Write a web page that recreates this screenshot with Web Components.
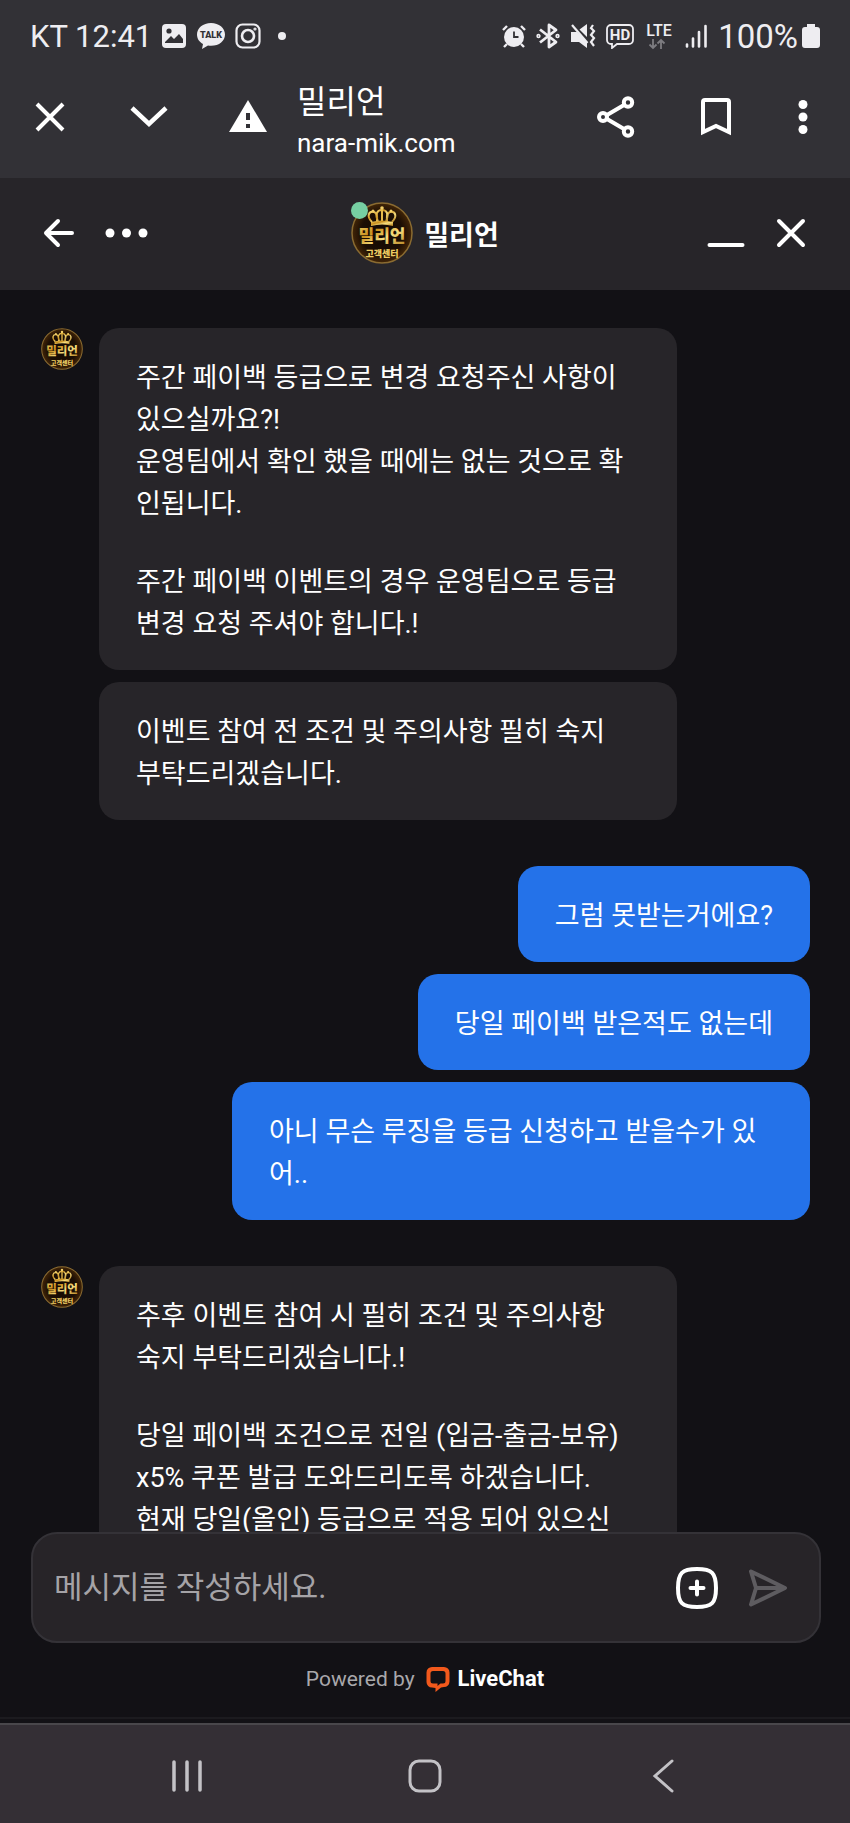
<!DOCTYPE html>
<html lang="ko">
<head>
<meta charset="utf-8">
<meta name="viewport" content="width=device-width, initial-scale=1">
<title>밀리언</title>
<style>
    body {
        margin: 0;
        background: #121115;
        color: #fff;
        font-family: Roboto, "Noto Sans CJK KR", sans-serif;
    }
</style>
</head>
<body>

<phone-screen>
    <status-bar slot="top" carrier="KT" time="12:41" battery="100%"></status-bar>
    <browser-bar slot="top">
        <span slot="title">밀리언</span>
        <span slot="url">nara-mik.com</span>
    </browser-bar>
    <chat-header slot="top">밀리언</chat-header>

    <message-group from="agent">
        <chat-bubble>
            <p>주간 페이백 등급으로 변경 요청주신 사항이<br>있으실까요?!<br>운영팀에서 확인 했을 때에는 없는 것으로 확<br>인됩니다.</p>
            <p>주간 페이백 이벤트의 경우 운영팀으로 등급<br>변경 요청 주셔야 합니다.!</p>
        </chat-bubble>
        <chat-bubble>
            <p>이벤트 참여 전 조건 및 주의사항 필히 숙지<br>부탁드리겠습니다.</p>
        </chat-bubble>
    </message-group>

    <message-group from="me">
        <chat-bubble><p>그럼 못받는거에요?</p></chat-bubble>
        <chat-bubble><p>당일 페이백 받은적도 없는데</p></chat-bubble>
        <chat-bubble><p>아니 무슨 루징을 등급 신청하고 받을수가 있어..</p></chat-bubble>
    </message-group>

    <message-group from="agent">
        <chat-bubble>
            <p>추후 이벤트 참여 시 필히 조건 및 주의사항<br>숙지 부탁드리겠습니다.!</p>
            <p>당일 페이백 조건으로 전일 (입금-출금-보유)<br>x5% 쿠폰 발급 도와드리도록 하겠습니다.<br>현재 당일(올인) 등급으로 적용 되어 있으신</p>
        </chat-bubble>
    </message-group>

    <chat-composer slot="bottom" placeholder="메시지를 작성하세요."></chat-composer>
    <powered-by slot="bottom"></powered-by>
    <nav-bar slot="bottom"></nav-bar>
</phone-screen>

<script>
// makes a template and hands it back
function tpl(html) {
    const t = document.createElement("template");
    t.innerHTML = html;
    return t;
}

// every component clones its template into an open shadow root
class BaseElement extends HTMLElement {
    constructor() {
        super();
        this.attachShadow({mode: "open"});
        this.shadowRoot.appendChild(this.constructor.template.content.cloneNode(true));
    }
}

const buttonCss = `
    button {
        display: flex;
        align-items: center;
        justify-content: center;
        margin: 0;
        padding: 0;
        border: 0;
        background: none;
        color: inherit;
        cursor: pointer;
    }
    svg { display: block; flex: none; }
`;

//PHONE SCREEN - fixed bars at both ends, messages in between
class PhoneScreen extends BaseElement {
    static template = tpl(`
        <style>
            :host { display: flex; flex-direction: column; height: 100vh; }
            main {
                flex: 1;
                min-height: 0;
                overflow: hidden;
                display: flex;
                flex-direction: column;
                gap: 46px;
                box-sizing: border-box;
                padding: 38px 40px 0 41px;
            }
        </style>
        <slot name="top"></slot>
        <main><slot></slot></main>
        <slot name="bottom"></slot>
    `);
}
customElements.define("phone-screen", PhoneScreen);

//STATUS BAR
class StatusBar extends BaseElement {
    static template = tpl(`
        <style>
            :host {
                display: flex;
                justify-content: space-between;
                align-items: center;
                height: 72px;
                flex: none;
                padding: 0 30px;
                background: #323136;
                color: #eeedf1;
            }
            div { display: flex; align-items: center; }
            .left { gap: 9px; font-size: 31px; }
            .right { gap: 10px; font-size: 33px; }
            .power { gap: 4px; }
            svg { display: block; flex: none; }
            .more { padding-left: 8px; }
        </style>
        <div class="left">
            <span class="clock"></span>
            <svg width="26" height="26" viewBox="0 0 26 26"><rect x="1" y="1" width="24" height="24" rx="4" fill="currentColor"/><circle cx="8" cy="8" r="2.6" fill="#323136"/><path d="M4 19l6-6 3 3 5-5 4 5v4H4z" fill="#323136"/></svg>
            <svg width="30" height="28" viewBox="0 0 30 28"><path d="M15 1C7 1 1 6 1 12.500C1 17 3.500 20 7 22l-1 5 6-3.400C22 25 29 19.500 29 12.500 29 6 23 1 15 1z" fill="currentColor"/><text x="15" y="16" text-anchor="middle" font-size="9" font-weight="900" fill="#323136">TALK</text></svg>
            <svg width="26" height="26" viewBox="0 0 26 26" fill="none" stroke="currentColor"><rect x="1.500" y="1.500" width="23" height="23" rx="6" stroke-width="2.200"/><circle cx="13" cy="13" r="6" stroke-width="2.600"/><circle cx="20" cy="6" r="1" stroke-width="1.200"/></svg>
            <svg class="more" width="8" height="8" viewBox="0 0 8 8"><circle cx="4" cy="4" r="4" fill="currentColor"/></svg>
        </div>
        <div class="right">
            <svg width="24" height="24" viewBox="0 0 24 24" fill="none" stroke="currentColor" stroke-width="2.400"><circle cx="12" cy="13" r="10" fill="currentColor" stroke="none"/><path d="M1 6l4-4M23 6l-4-4M5 20l-3 3M19 20l3 3"/><path d="M12 7.500V13h4.500" stroke="#323136" stroke-width="1.800"/></svg>
            <svg width="24" height="26" viewBox="0 0 24 26" fill="none" stroke="currentColor" stroke-width="2.800" stroke-linejoin="round"><path d="M4 6.500L20 19l-7 5V2l7 5L4 19.500"/><circle cx="2.500" cy="13" r=".8"/><circle cx="21.500" cy="13" r=".8"/></svg>
            <svg width="26" height="26" viewBox="0 0 26 26"><path d="M1 9h6l10 10v6l-8-6H1zM9.500 6.500L17 1v13z" fill="currentColor"/><path d="M2 2l15.500 18" fill="none" stroke="currentColor" stroke-width="2.200"/><path d="M23 2l-2 3 3 3-3 4 3 3-3 4 3 4" fill="none" stroke="currentColor" stroke-width="2.200"/></svg>
            <svg width="28" height="26" viewBox="0 0 28 26"><path d="M5 2h18a4 4 0 0 1 4 4v11a4 4 0 0 1-4 4H11l-5 4v-4H5a4 4 0 0 1-4-4V6a4 4 0 0 1 4-4z" fill="none" stroke="currentColor" stroke-width="1.800"/><text x="14" y="17" text-anchor="middle" font-size="15" font-weight="700" fill="currentColor">HD</text></svg>
            <svg width="30" height="34" viewBox="0 0 30 34"><text x="15" y="17" text-anchor="middle" font-size="16" font-weight="500" fill="currentColor">LTE</text><path d="M9 20v9M5.500 25.500L9 29l3.500-3.500M17 30v-9M13.500 24.500L17 21l3.500 3.500" fill="none" stroke="#7d7c81" stroke-width="1.800"/></svg>
            <svg width="24" height="26" viewBox="0 0 24 26" stroke="currentColor" stroke-width="2.600" stroke-linecap="round"><path d="M3 21.500v2M9 15.500v8M15 9v14.500M21.500 3v20.500"/></svg>
            <div class="power">
                <span class="battery"></span>
                <svg width="18" height="26" viewBox="0 0 18 26"><path d="M5 1h8v3h2a3 3 0 0 1 3 3v15a3 3 0 0 1-3 3H3a3 3 0 0 1-3-3V7a3 3 0 0 1 3-3h2z" fill="currentColor"/></svg>
            </div>
        </div>
    `);
    connectedCallback() {
        this.shadowRoot.querySelector(".clock").textContent = this.getAttribute("carrier") + " " + this.getAttribute("time");
        this.shadowRoot.querySelector(".battery").textContent = this.getAttribute("battery");
    }
}
customElements.define("status-bar", StatusBar);

//BROWSER BAR
class BrowserBar extends BaseElement {
    static template = tpl(`
        <style>
            ${buttonCss}
            :host {
                display: flex;
                align-items: center;
                height: 106px;
                flex: none;
                box-sizing: border-box;
                padding: 0 41px 16px 0;
                background: #323136;
            }
            .left { display: flex; }
            .left button { width: 99px; height: 64px; }
            .page { flex: 1; min-width: 0; padding-top: 10px; }
            .title { font-size: 32px; line-height: 42px; }
            .url { font-size: 26px; line-height: 40px; }
            .right { display: flex; align-items: center; gap: 66px; }
        </style>
        <div class="left">
            <button aria-label="닫기"><svg width="30" height="30" viewBox="0 0 30 30" stroke="currentColor" stroke-width="4"><path d="M2 2l26 26M28 2L2 28"/></svg></button>
            <button aria-label="접기"><svg width="38" height="30" viewBox="0 0 38 30" fill="none" stroke="currentColor" stroke-width="4.500"><path d="M2 6l17 16L36 6"/></svg></button>
            <button aria-label="보안 경고"><svg width="38" height="36" viewBox="0 0 38 36"><path d="M19 1L38 33H0z" fill="currentColor"/><path d="M17 14h4v7h-4zM17 25h4v4h-4z" fill="#323136"/></svg></button>
        </div>
        <div class="page">
            <div class="title"><slot name="title"></slot></div>
            <div class="url"><slot name="url"></slot></div>
        </div>
        <div class="right">
            <button aria-label="공유"><svg width="38" height="42" viewBox="0 0 38 42" fill="none" stroke="currentColor" stroke-width="4"><circle cx="6" cy="21" r="4"/><circle cx="31" cy="6.500" r="4.200"/><circle cx="31" cy="35.500" r="4.200"/><path d="M10 19L27 9M10 23l17 10"/></svg></button>
            <button aria-label="북마크"><svg width="30" height="38" viewBox="0 0 30 38" fill="none" stroke="currentColor" stroke-width="4"><path d="M2 34V4q0-2 2-2h22q2 0 2 2v30l-13-6z"/></svg></button>
            <button aria-label="더보기"><svg width="12" height="36" viewBox="0 0 12 36" fill="currentColor"><circle cx="6" cy="5.500" r="4.500"/><circle cx="6" cy="18" r="4.500"/><circle cx="6" cy="30.500" r="4.500"/></svg></button>
        </div>
    `);
}
customElements.define("browser-bar", BrowserBar);

//AGENT AVATAR - gold crown badge, scales with its host
class AgentAvatar extends BaseElement {
    static template = tpl(`
        <style>
            :host { display: block; flex: none; width: 42px; height: 42px; }
            svg { display: block; width: 100%; height: 100%; }
            text { font-family: "Noto Sans CJK KR", sans-serif; font-weight: 900; text-anchor: middle; }
        </style>
        <svg viewBox="0 0 62 62">
            <defs>
                <linearGradient id="gold" x1="0" y1="0" x2="1" y2="1">
                    <stop offset="0" stop-color="#f9dc74"/>
                    <stop offset=".35" stop-color="#c98f1e"/>
                    <stop offset=".6" stop-color="#f7df80"/>
                    <stop offset="1" stop-color="#b07a18"/>
                </linearGradient>
                <radialGradient id="back">
                    <stop offset="0" stop-color="#120903"/>
                    <stop offset=".7" stop-color="#1c0e04"/>
                    <stop offset="1" stop-color="#432607"/>
                </radialGradient>
            </defs>
            <circle cx="31" cy="31" r="30" fill="url(#back)" stroke="#8a6b31" stroke-width="1.500"/>
            <g fill="none" stroke="url(#gold)" stroke-width="2">
                <path d="M21 20C15 14 18 9 23 10c4 1 3 6 3 10M41 20c6-6 3-11-2-10-4 1-3 6-3 10"/>
                <path d="M27 20c-3-8-1-12 4-12s7 4 4 12"/>
            </g>
            <path d="M30 8h2v12h-2z" fill="#e5b94a"/>
            <g fill="#f3d068"><circle cx="31" cy="6" r="1.800"/><circle cx="22" cy="9" r="1.500"/><circle cx="40" cy="9" r="1.500"/></g>
            <path d="M20 20q11-3 22 0v4q-11-3-22 0z" fill="url(#gold)"/>
            <text x="31" y="40" font-size="17" fill="url(#gold)">밀리언</text>
            <text x="31" y="55" font-size="9" fill="#f0ce63">고객센터</text>
        </svg>
    `);
}
customElements.define("agent-avatar", AgentAvatar);

//CHAT HEADER
class ChatHeader extends BaseElement {
    static template = tpl(`
        <style>
            ${buttonCss}
            :host {
                display: grid;
                grid-template-columns: 1fr auto 1fr;
                align-items: center;
                height: 112px;
                flex: none;
                box-sizing: border-box;
                padding: 0 43px 2px;
                background: #272529;
            }
            .left, .right { display: flex; align-items: center; gap: 30px; }
            .right { justify-content: flex-end; }
            .agent { display: flex; align-items: center; gap: 11px; }
            .photo { position: relative; }
            agent-avatar { width: 62px; height: 62px; }
            .online {
                position: absolute;
                left: 0;
                top: 0;
                width: 17px;
                height: 17px;
                border-radius: 50%;
                background: #76cfa2;
            }
            h1 { margin: 0; padding-top: 6px; font-size: 27px; line-height: 36px; font-weight: 700; }
        </style>
        <div class="left">
            <button aria-label="뒤로"><svg width="32" height="30" viewBox="0 0 32 30" fill="none" stroke="currentColor" stroke-width="4" stroke-linecap="round" stroke-linejoin="round"><path d="M15 3L3 15l12 12M3 15h26"/></svg></button>
            <button aria-label="메뉴"><svg width="44" height="10" viewBox="0 0 44 10" fill="currentColor"><circle cx="5" cy="5" r="4.500"/><circle cx="21.500" cy="5" r="4.500"/><circle cx="38" cy="5" r="4.500"/></svg></button>
        </div>
        <div class="agent">
            <div class="photo"><agent-avatar></agent-avatar><span class="online"></span></div>
            <h1><slot></slot></h1>
        </div>
        <div class="right">
            <button aria-label="최소화"><svg width="38" height="30" viewBox="0 0 38 30" stroke="currentColor" stroke-width="4" stroke-linecap="round"><path d="M2.500 27h33"/></svg></button>
            <button aria-label="채팅 닫기"><svg width="32" height="30" viewBox="0 0 32 30" stroke="currentColor" stroke-width="4" stroke-linecap="round"><path d="M4 3l24 24M28 3L4 27"/></svg></button>
        </div>
    `);
}
customElements.define("chat-header", ChatHeader);

//MESSAGE GROUP - from="agent" has the avatar, from="me" sits right
class MessageGroup extends BaseElement {
    static template = tpl(`
        <style>
            :host { display: flex; gap: 16px; flex: none; }
            .list {
                flex: 1;
                min-width: 0;
                display: flex;
                flex-direction: column;
                gap: 12px;
            }
            :host([from="me"]) { --bubble: #2472e9; --bubble-width: auto; }
            :host([from="me"]) .list { align-items: flex-end; }
            :host([from="me"]) agent-avatar { display: none; }
        </style>
        <agent-avatar></agent-avatar>
        <div class="list"><slot></slot></div>
    `);
}
customElements.define("message-group", MessageGroup);

//CHAT BUBBLE
class ChatBubble extends BaseElement {
    static template = tpl(`
        <style>
            :host {
                display: flex;
                flex-direction: column;
                gap: 36px;
                box-sizing: border-box;
                width: var(--bubble-width, 68vw);
                max-width: 68vw;
                padding: 29px 37px 25px;
                border-radius: 20px;
                background: var(--bubble, #272529);
                font-size: 27px;
                line-height: 42px;
            }
            ::slotted(p) { margin: 0; }
        </style>
        <slot></slot>
    `);
}
customElements.define("chat-bubble", ChatBubble);

//COMPOSER
class ChatComposer extends BaseElement {
    static template = tpl(`
        <style>
            ${buttonCss}
            :host { display: block; flex: none; padding: 0 29px 0 31px; }
            form {
                display: flex;
                align-items: center;
                gap: 30px;
                height: 111px;
                box-sizing: border-box;
                padding: 0 31px 0 21px;
                border: 2px solid #343237;
                border-radius: 26px;
                background: #272428;
            }
            input {
                flex: 1;
                min-width: 0;
                padding: 0;
                border: 0;
                outline: 0;
                background: none;
                color: #fff;
                font-family: inherit;
                font-size: 31px;
                line-height: 42px;
            }
            input::placeholder { color: #a5a3a7; opacity: 1; }
            .send { color: #5e5c60; }
        </style>
        <form>
            <input type="text" aria-label="메시지">
            <button type="button" aria-label="첨부"><svg width="42" height="42" viewBox="0 0 42 42" fill="none" stroke="currentColor" stroke-width="4" stroke-linecap="round"><path d="M21 2c15 0 19 4 19 19s-4 19-19 19S2 36 2 21 6 2 21 2z"/><path d="M21 14.500v13M14.500 21h13"/></svg></button>
            <button type="button" class="send" aria-label="보내기"><svg width="40" height="40" viewBox="0 0 40 40" fill="none" stroke="currentColor" stroke-width="4" stroke-linejoin="round" stroke-linecap="round"><path d="M3 3.500L37 20 3 36.500 8 20z"/><path d="M8 20h27"/></svg></button>
        </form>
    `);
    connectedCallback() {
        this.shadowRoot.querySelector("input").placeholder = this.getAttribute("placeholder");
    }
}
customElements.define("chat-composer", ChatComposer);

//POWERED BY
class PoweredBy extends BaseElement {
    static template = tpl(`
        <style>
            :host {
                display: flex;
                justify-content: center;
                align-items: center;
                gap: 11px;
                height: 76px;
                flex: none;
                box-sizing: border-box;
                padding-bottom: 2px;
                color: #a9a8ab;
                font-size: 21px;
                line-height: 28px;
                border-bottom: 2px solid #1c1b1f;
            }
            a {
                display: flex;
                align-items: center;
                gap: 8px;
                color: #fff;
                font-size: 22px;
                font-weight: 700;
                text-decoration: none;
            }
            svg { display: block; }
        </style>
        <span>Powered by</span>
        <a href="#">
            <svg width="24" height="26" viewBox="0 0 24 26"><path d="M6 1h12a5.500 5.500 0 0 1 5.500 5.500v9A5.500 5.500 0 0 1 18 21l-3 .500L9.500 26v-4L6 21.500A5.500 5.500 0 0 1 .5 16V6.500A5.500 5.500 0 0 1 6 1zM7 5Q4.500 5 4.500 7.500v7.500Q4.500 17.500 7 17.500h4.500V20l3-2.500H17q2.500 0 2.500-2.500V7.500Q19.500 5 17 5z" fill="#f2591c" fill-rule="evenodd"/></svg>
            LiveChat
        </a>
    `);
}
customElements.define("powered-by", PoweredBy);

//NAV BAR
class NavBar extends BaseElement {
    static template = tpl(`
        <style>
            ${buttonCss}
            :host {
                display: grid;
                grid-template-columns: repeat(3, 1fr);
                height: 100px;
                flex: none;
                box-sizing: border-box;
                margin-top: 4px;
                padding: 4px 8% 0;
                border-top: 2px solid #49474b;
                background: #342f35;
                color: #c3c2c6;
            }
        </style>
        <button aria-label="최근 앱"><svg width="34" height="34" viewBox="0 0 34 34" stroke="currentColor" stroke-width="3.500" stroke-linecap="round"><path d="M4 3v28M17 3v28M30 3v28"/></svg></button>
        <button aria-label="홈"><svg width="34" height="34" viewBox="0 0 34 34" fill="none" stroke="currentColor" stroke-width="3"><rect x="2" y="2" width="30" height="30" rx="9"/></svg></button>
        <button aria-label="뒤로"><svg width="34" height="34" viewBox="0 0 34 34" fill="none" stroke="currentColor" stroke-width="3" stroke-linecap="round"><path d="M26 2L9 17l17 15"/></svg></button>
    `);
}
customElements.define("nav-bar", NavBar);
</script>
</body>
</html>
